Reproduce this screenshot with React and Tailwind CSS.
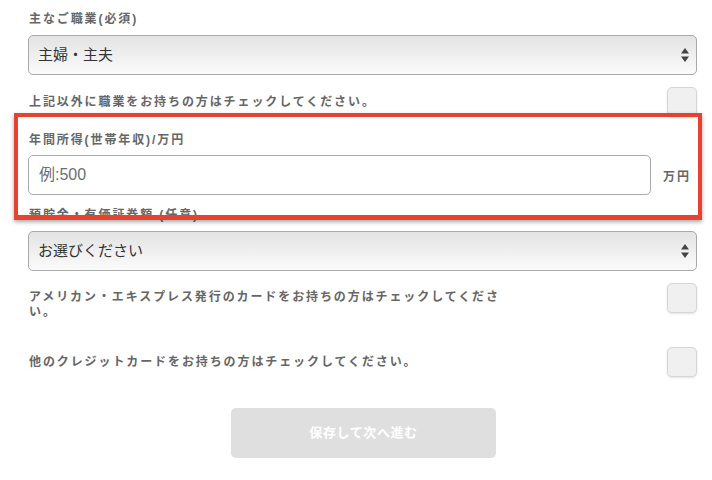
import React from "react";

const FONT = { fontFamily: '"Liberation Sans", "Noto Sans CJK JP", sans-serif' };

function Arrows() {
  return (
    <svg width="8" height="14" viewBox="0 0 8 14" className="shrink-0">
      <polygon points="4,0 8,5.5 0,5.5" fill="#444" />
      <polygon points="0,8.5 8,8.5 4,14" fill="#444" />
    </svg>
  );
}

function SelectBox({ value }) {
  return (
    <div className="h-[40px] rounded-[5px] border border-[#a9a9a9] bg-gradient-to-b from-[#e3e3e3] to-[#fbfbfb] flex items-center justify-between pl-[9px] pr-[7px]">
      <span className="text-[15px] text-[#333]">{value}</span>
      <Arrows />
    </div>
  );
}

function Checkbox() {
  return (
    <div className="w-[30px] h-[30px] shrink-0 rounded-[5px] border border-[#d6d6d6] bg-[#f0f0f0] shadow-[0_1px_2px_rgba(0,0,0,0.12)]" />
  );
}

const labelCls = "h-[20px] leading-[20px] pl-px text-[12px] font-bold text-[#666] tracking-[1.9px]";

export default function App() {
  return (
    <div className="relative w-[712px] h-[480px] bg-white overflow-hidden" style={FONT}>
      <div className="flex flex-col pl-[28px] pr-[15px] pt-[9px]">
        <div className={labelCls}>主なご職業(必須)</div>
        <div className="mt-[6px]">
          <SelectBox value="主婦・主夫" />
        </div>

        <div className="mt-[12px] h-[30px] flex items-center justify-between">
          <span className="pl-px text-[12px] font-bold text-[#666] tracking-[1.9px]">
            上記以外に職業をお持ちの方はチェックしてください。
          </span>
          <Checkbox />
        </div>

        <div className={"mt-[13px] " + labelCls}>年間所得(世帯年収)/万円</div>
        <div className="mt-[5px] flex items-center">
          <div className="flex-1 h-[40px] rounded-[5px] border border-[#aaaaaa] bg-white flex items-center pl-[10px]">
            <span className="text-[16px] text-[#6e6e6e]">例:500</span>
          </div>
          <span className="ml-[12px] w-[34px] pt-[4px] text-[12px] font-bold text-[#666] tracking-[1.9px]">万円</span>
        </div>

        <div className={"mt-[10px] " + labelCls}>預貯金・有価証券額 (任意)</div>
        <div className="mt-[6px]">
          <SelectBox value="お選びください" />
        </div>

        <div className="mt-[12px] flex items-start justify-between">
          <span className="pt-[7px] pl-px text-[12px] leading-[15px] font-bold text-[#666] tracking-[1.9px]">
            アメリカン・エキスプレス発行のカードをお持ちの方はチェックしてくださ
            <br />
            い。
          </span>
          <Checkbox />
        </div>

        <div className="mt-[27px] h-[30px] flex items-center justify-between">
          <span className="pl-px text-[12px] font-bold text-[#666] tracking-[1.9px]">
            他のクレジットカードをお持ちの方はチェックしてください。
          </span>
          <Checkbox />
        </div>

        <div className="mt-[31px] ml-[203px] w-[265px] h-[50px] rounded-[5px] bg-[#dfdfdf] flex items-center justify-center">
          <span className="text-[13px] font-bold text-white tracking-[0.6px]">保存して次へ進む</span>
        </div>
      </div>

      <div className="absolute left-[14px] top-[113px] w-[688px] h-[107px] border-[4px] border-b-[5px] border-[#e8412f] shadow-[0_2px_4px_rgba(0,0,0,0.35)]" />
    </div>
  );
}
